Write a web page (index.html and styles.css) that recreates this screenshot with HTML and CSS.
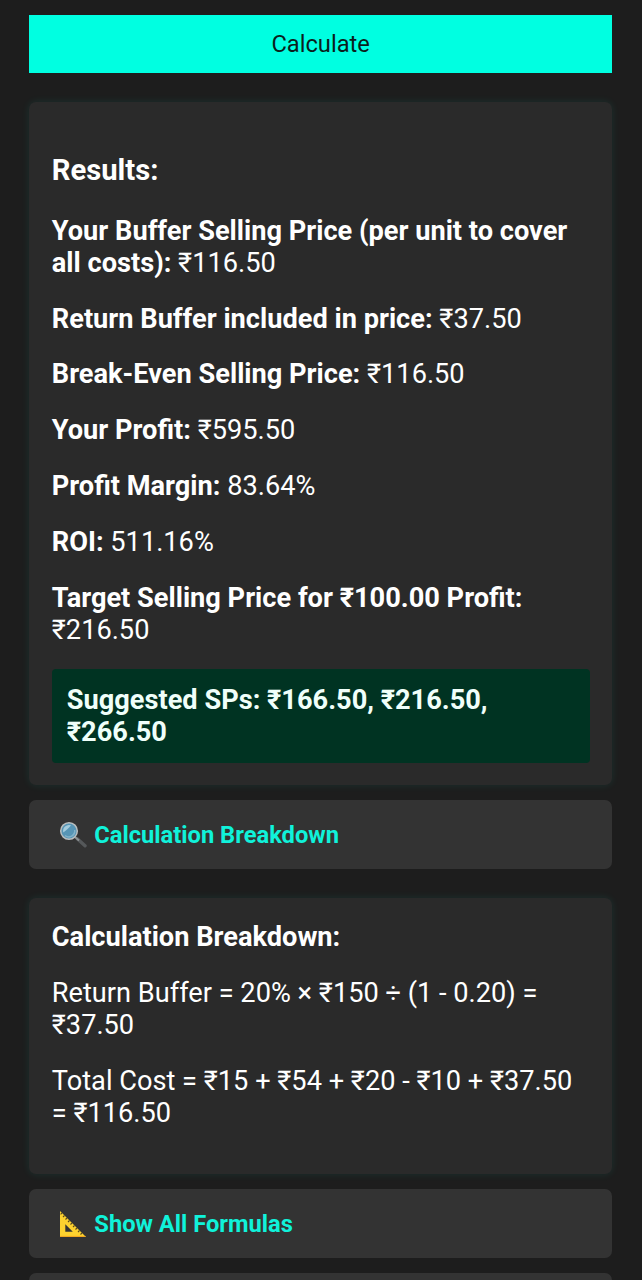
FILE: index.html
```
<!DOCTYPE html>
<html lang="en">
<head>
  <meta charset="UTF-8" />
  <meta name="viewport" content="width=device-width, initial-scale=1.0"/>
  <title>Selling Price Calculator</title>
  <link rel="stylesheet" href="styles.css">
</head>
<body>
  <div class="container">
    <button class="calculate" type="button">Calculate</button>

    <div class="card results">
      <h3>Results:</h3>
      <p><strong>Your Buffer Selling Price (per unit to cover<br>all costs):</strong> ₹116.50</p>
      <p><strong>Return Buffer included in price:</strong> ₹37.50</p>
      <p><strong>Break-Even Selling Price:</strong> ₹116.50</p>
      <p><strong>Your Profit:</strong> ₹595.50</p>
      <p><strong>Profit Margin:</strong> 83.64%</p>
      <p><strong>ROI:</strong> 511.16%</p>
      <p><strong>Target Selling Price for ₹100.00 Profit:</strong><br>₹216.50</p>
      <div class="suggested">Suggested SPs: ₹166.50, ₹216.50,<br>₹266.50</div>
    </div>

    <button class="toggle" type="button">
      <svg class="icon" viewBox="0 0 28 28" aria-hidden="true">
        <path d="M18.3 17.8L26 24.8" stroke="#55585a" stroke-width="3.4" stroke-linecap="round"/>
        <path d="M16 16L20 19.6" stroke="#8d9193" stroke-width="2"/>
        <circle cx="10" cy="10" r="8.3" fill="#5795b5" stroke="#b9bdbe" stroke-width="1.5"/>
        <path d="M4.3 11.5A6 6 0 0 1 12 4.3C10 7 7.5 9.5 4.3 11.5Z" fill="#a4ccdd"/>
        <path d="M6 14.5A6 6 0 0 0 15.7 9" fill="none" stroke="#82b3ca" stroke-width="1.5"/>
      </svg>
      <span>Calculation Breakdown</span>
    </button>

    <div class="card breakdown">
      <p><strong>Calculation Breakdown:</strong></p>
      <p>Return Buffer = 20% × ₹150 ÷ (1 - 0.20) =<br>₹37.50</p>
      <p>Total Cost = ₹15 + ₹54 + ₹20 - ₹10 + ₹37.50<br>= ₹116.50</p>
    </div>

    <button class="toggle" type="button">
      <svg class="icon" viewBox="0 0 28 28" aria-hidden="true">
        <path fill-rule="evenodd" d="M1 1L27 27H1ZM6.3 14.2V21.7H13.8Z" fill="#fdd22f"/>
        <path d="M1 26.4H26.5" stroke="#f2a51e" stroke-width="1"/>
        <path d="M3 3L1.6 4.4M5.5 5.5L4 7M8 8L6.5 9.5M10.5 10.5L9 12M13 13L11.5 14.5M15.5 15.5L14 17M18 18L16.5 19.5M20.5 20.5L19 22M23 23L21.5 24.5" stroke="#5c4a1b" stroke-width="1.1"/>
      </svg>
      <span>Show All Formulas</span>
    </button>

    <button class="toggle" type="button"></button>
  </div>
</body>
</html>
```

FILE: styles.css
```
* { box-sizing: border-box; }

html {
  height: 100%;
  overflow: hidden;
}

body {
  font-family: Roboto, Arial, sans-serif;
  margin: 0;
  height: 100%;
  overflow: hidden;
  background-color: #1d1d1d;
  color: #fff;
  font-size: 27.2px;
  line-height: 32px;
}

.container {
  height: 100%;
  overflow: hidden;
  padding: 15px 30px 0 29.3px;
}

button {
  display: block;
  width: 100%;
  border: none;
  font-family: inherit;
  cursor: pointer;
}

.calculate {
  height: 58px;
  margin-bottom: 29.4px;
  background-color: #00ffe1;
  color: #0b1f1d;
  font-size: 23.7px;
}

.card {
  padding: 22.5px;
  margin-bottom: 15px;
  background-color: #2a2a2a;
  border-radius: 7px;
  box-shadow: 0 0 8px rgba(0, 255, 225, 0.09);
}

.card h3 {
  margin: 28.5px 0 28px;
  font-size: 29.2px;
  line-height: 34px;
}

.card p {
  margin: 0 0 23.8px;
  white-space: nowrap;
}

.results {
  height: 682.6px;
  padding-top: 22px;
}

.results p:last-of-type {
  margin-bottom: 23.7px;
}

.suggested {
  padding: 15px 15px 14.5px;
  background-color: #003322;
  border-radius: 4px;
  color: #f0fffa;
  font-weight: bold;
  white-space: nowrap;
}

.toggle {
  display: flex;
  align-items: center;
  gap: 7px;
  height: 69px;
  padding: 1px 30px 0;
  margin-bottom: 15px;
  background-color: #333;
  color: #10f2da;
  border-radius: 7px;
  font-size: 23.7px;
  font-weight: bold;
}

.icon {
  width: 28px;
  height: 28px;
}

.breakdown {
  height: 275.5px;
  margin-top: 29.5px;
  padding-top: 22.6px;
}
```
